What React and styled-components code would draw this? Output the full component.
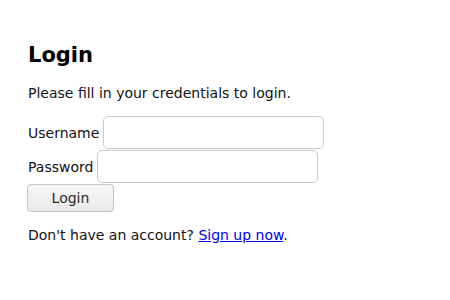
import React from "react";
import styled, { createGlobalStyle } from "styled-components";

const Global = createGlobalStyle`
  html, body { margin: 0; padding: 0; background: #ffffff; }
  body {
    font-family: "DejaVu Sans", "Liberation Sans", sans-serif;
    font-size: 14px;
    color: #111111;
  }
`;

const Page = styled.div`
  padding: 43px 28px 20px 28px;
`;

const Title = styled.h2`
  margin: 0;
  font-size: 21px;
  font-weight: bold;
  color: #000000;
`;

const Text = styled.p`
  margin: ${(p) => p.$top}px 0 0 0;
`;

const Form = styled.form`
  margin-top: 15px;
  display: flex;
  flex-direction: column;
  align-items: flex-start;
  gap: 1px;
`;

const Row = styled.div`
  display: flex;
  align-items: center;
  gap: 3.5px;
`;

const Label = styled.label`
  color: #111111;
`;

const Input = styled.input`
  box-sizing: border-box;
  width: 221px;
  height: 33px;
  border: 1px solid #c9c9c9;
  border-radius: 5px;
  background: #ffffff;
  padding: 4px 8px;
  font: inherit;
  outline: none;
`;

const Button = styled.button`
  box-sizing: border-box;
  width: 87px;
  height: 28px;
  margin-left: -1px;
  border: 1px solid #c4c4c4;
  border-radius: 4px;
  background: linear-gradient(#f6f6f6, #e9e9e9);
  color: #2a2a2a;
  font: inherit;
  padding: 0;
  cursor: pointer;
`;

const Link = styled.a`
  color: #0000ee;
  text-decoration: underline;
`;

export default function App() {
  return (
    <>
      <Global />
      <Page>
        <Title>Login</Title>
        <Text $top={18}>Please fill in your credentials to login.</Text>
        <Form onSubmit={(e) => e.preventDefault()}>
          <Row>
            <Label htmlFor="u">Username</Label>
            <Input id="u" type="text" />
          </Row>
          <Row>
            <Label htmlFor="p">Password</Label>
            <Input id="p" type="password" />
          </Row>
          <Button type="submit">Login</Button>
        </Form>
        <Text $top={15}>
          Don't have an account? <Link href="#">Sign up now</Link>.
        </Text>
      </Page>
    </>
  );
}
